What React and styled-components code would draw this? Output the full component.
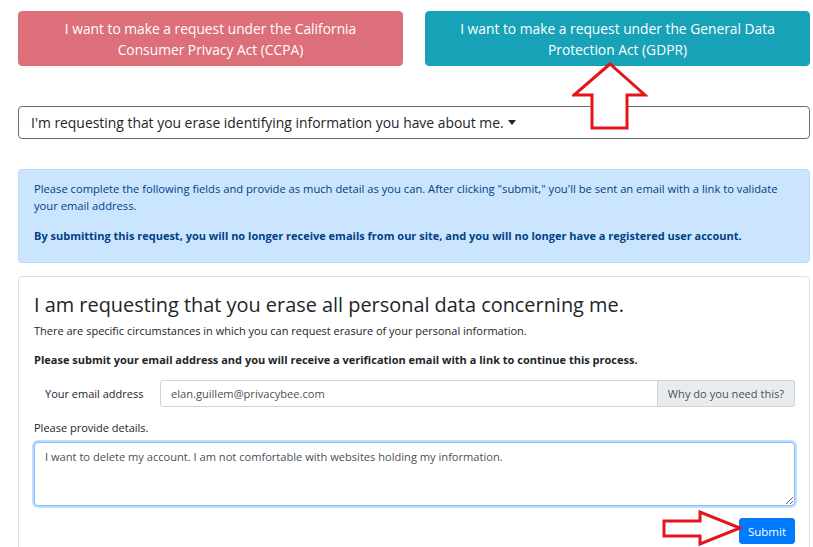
import React from "react";
import styled, { createGlobalStyle } from "styled-components";

const GlobalStyle = createGlobalStyle`
  * { box-sizing: border-box; }
  body {
    margin: 0;
    background: #fff;
    font-family: "Open Sans", "Noto Sans", sans-serif;
    color: #212529;
  }
`;

const Page = styled.div`
  position: relative;
  padding: 11px 3px 0 18px;
  height: 547px;
  overflow: hidden;
`;

const ChoiceRow = styled.div`
  display: grid;
  grid-template-columns: 1fr 1fr;
  gap: 22px;
`;

const ChoiceButton = styled.button`
  height: 55px;
  border: 1px solid ${(p) => p.$border};
  background: ${(p) => p.$bg};
  color: #fff;
  border-radius: 4px;
  font-family: inherit;
  font-size: 13.8px;
  line-height: 21px;
  padding: 5px 30px;
  text-align: center;
`;

const Dropdown = styled.div`
  margin-top: 40px;
  height: 33px;
  border: 1px solid #6c6c6c;
  border-radius: 4px;
  display: flex;
  align-items: center;
  padding: 0 12px;
  font-size: 13.9px;
  color: #212529;
`;

const Caret = styled.span`
  display: inline-block;
  margin-left: 4px;
  border-top: 5px solid #212529;
  border-left: 4px solid transparent;
  border-right: 4px solid transparent;
  vertical-align: 3px;
`;

const Alert = styled.div`
  margin-top: 30px;
  height: 94px;
  background: #cce5ff;
  border: 1px solid #b8daff;
  border-radius: 4px;
  color: #004085;
  padding: 10px 15px;
  font-size: 11.2px;
  line-height: 17px;
`;

const AlertText = styled.p`
  margin: 0 0 13px;
  font-size: ${(p) => (p.$bold ? "11px" : "inherit")};
  font-weight: ${(p) => (p.$bold ? 700 : 400)};
`;

const Card = styled.div`
  margin-top: 13px;
  border: 1px solid #dfdfdf;
  border-radius: 4px;
  padding: 14px 14px 20px 15px;
`;

const Heading = styled.h3`
  margin: 0 0 3px;
  font-size: 19.9px;
  font-weight: 500;
  line-height: 28px;
  color: #212529;
`;

const Lead = styled.p`
  margin: 0 0 12px;
  font-size: 11px;
  line-height: 17px;
  color: #212529;
  font-weight: ${(p) => (p.$bold ? 700 : 400)};
`;

const InputGroup = styled.div`
  display: flex;
  height: 27px;
  margin-top: 12px;
`;

const InputLabel = styled.div`
  width: 126px;
  display: flex;
  align-items: center;
  padding-left: 11px;
  font-size: 11px;
  color: #212529;
`;

const TextInput = styled.div`
  flex: 1;
  display: flex;
  align-items: center;
  border: 1px solid #ced4da;
  border-radius: 3px 0 0 3px;
  padding: 0 10px;
  font-size: 11.1px;
  color: #495057;
`;

const Addon = styled.div`
  width: 137px;
  display: flex;
  align-items: center;
  justify-content: center;
  background: #e9ecef;
  border: 1px solid #ced4da;
  border-left: none;
  border-radius: 0 3px 3px 0;
  font-size: 11.1px;
  color: #495057;
`;

const FieldLabel = styled.div`
  margin-top: 12px;
  font-size: 11px;
  line-height: 17px;
`;

const TextArea = styled.textarea`
  display: block;
  width: 100%;
  height: 64px;
  margin-top: 6px;
  border: 1px solid #80bdff;
  border-radius: 4px;
  box-shadow: 0 0 0 2px rgba(0, 123, 255, 0.25);
  padding: 5px 10px;
  font-family: inherit;
  font-size: 11.1px;
  line-height: 17px;
  color: #495057;
  outline: none;
  resize: vertical;
`;

const Actions = styled.div`
  display: flex;
  justify-content: flex-end;
  margin-top: 12px;
`;

const SubmitButton = styled.button`
  height: 26px;
  padding: 0 8px;
  background: #007bff;
  border: 1px solid #007bff;
  border-radius: 3px;
  color: #fff;
  font-family: inherit;
  font-size: 11.5px;
`;

const Annotation = styled.svg`
  position: absolute;
  left: ${(p) => p.$x}px;
  top: ${(p) => p.$y}px;
  pointer-events: none;
`;

export default function App() {
  return (
    <>
      <GlobalStyle />
      <Page>
        <ChoiceRow>
          <ChoiceButton $bg="#dc6f79" $border="#dc6f79">
            I want to make a request under the California Consumer Privacy Act
            (CCPA)
          </ChoiceButton>
          <ChoiceButton $bg="#17a2b8" $border="#17a2b8">
            I want to make a request under the General Data Protection Act
            (GDPR)
          </ChoiceButton>
        </ChoiceRow>

        <Dropdown>
          I'm requesting that you erase identifying information you have about
          me.
          <Caret />
        </Dropdown>

        <Alert>
          <AlertText>
            Please complete the following fields and provide as much detail as
            you can. After clicking "submit," you'll be sent an email with a
            link to validate your email address.
          </AlertText>
          <AlertText $bold>
            By submitting this request, you will no longer receive emails from
            our site, and you will no longer have a registered user account.
          </AlertText>
        </Alert>

        <Card>
          <Heading>
            I am requesting that you erase all personal data concerning me.
          </Heading>
          <Lead>
            There are specific circumstances in which you can request erasure
            of your personal information.
          </Lead>
          <Lead $bold>
            Please submit your email address and you will receive a
            verification email with a link to continue this process.
          </Lead>
          <InputGroup>
            <InputLabel>Your email address</InputLabel>
            <TextInput>elan.guillem@privacybee.com</TextInput>
            <Addon>Why do you need this?</Addon>
          </InputGroup>
          <FieldLabel>Please provide details.</FieldLabel>
          <TextArea
            readOnly
            defaultValue="I want to delete my account. I am not comfortable with websites holding my information."
          />
          <Actions>
            <SubmitButton>Submit</SubmitButton>
          </Actions>
        </Card>

        <Annotation $x={572} $y={62} width="76" height="70" viewBox="0 0 76 70">
          <polygon
            points="38,2 2,33 20,33 20,66 55,66 55,33 73,33"
            fill="#fff"
            stroke="#e3141c"
            strokeWidth="3"
            strokeLinejoin="miter"
          />
        </Annotation>
        <Annotation $x={660} $y={510} width="84" height="36" viewBox="0 0 84 36">
          <polygon
            points="4,11 40,11 40,2 80,18 40,34 40,26 4,26"
            fill="#fff"
            stroke="#e3141c"
            strokeWidth="3"
          />
        </Annotation>
      </Page>
    </>
  );
}
